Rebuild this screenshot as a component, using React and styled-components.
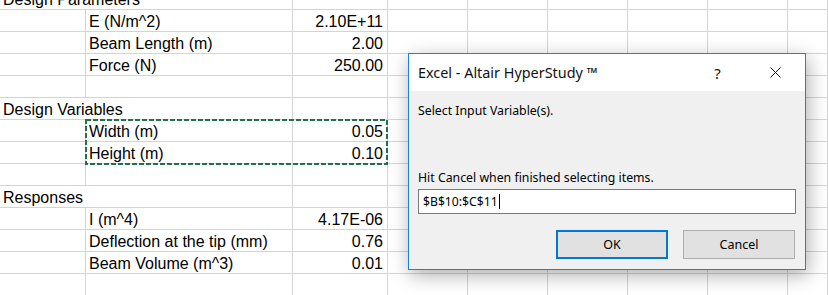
import React from "react";
import styled, { createGlobalStyle } from "styled-components";

const GlobalStyle = createGlobalStyle`
  html, body {
    margin: 0;
    padding: 0;
    background: #fff;
    overflow: hidden;
  }
  * {
    box-sizing: border-box;
  }
`;

const rows = [
  { head: "Design Parameters" },
  { label: "E (N/m^2)", value: "2.10E+11" },
  { label: "Beam Length (m)", value: "2.00" },
  { label: "Force (N)", value: "250.00" },
  {},
  { head: "Design Variables" },
  { label: "Width (m)", value: "0.05" },
  { label: "Height (m)", value: "0.10" },
  {},
  { head: "Responses" },
  { label: "I (m^4)", value: "4.17E-06" },
  { label: "Deflection at the tip (mm)", value: "0.76" },
  { label: "Beam Volume (m^3)", value: "0.01" },
  {},
];

const App = () => {
  return (
    <Page>
      <GlobalStyle />
      <Sheet>
        {rows.map((r, i) => (
          <React.Fragment key={i}>
            {r.head ? (
              <Cell $span={2}>{r.head}</Cell>
            ) : (
              <>
                <Cell />
                <Cell>{r.label}</Cell>
              </>
            )}
            <Cell $right>{r.value}</Cell>
            <Cell />
            <Cell />
            <Cell />
            <Cell />
            <Cell />
            <Cell />
          </React.Fragment>
        ))}
        <Marquee>
          <svg width="304" height="46" viewBox="0 0 304 46">
            <rect
              x="1"
              y="1"
              width="301"
              height="44"
              fill="none"
              stroke="#217346"
              strokeWidth="2"
              strokeDasharray="5 2"
            />
          </svg>
        </Marquee>
      </Sheet>

      <Dialog>
        <TitleBar>
          <Title>Excel - Altair HyperStudy ™</Title>
          <TitleButton>?</TitleButton>
          <TitleButton>
            <svg width="11" height="11" viewBox="0 0 11 11">
              <path d="M0.5 0.5 L10.5 10.5 M10.5 0.5 L0.5 10.5" stroke="#111" strokeWidth="1" fill="none" />
            </svg>
          </TitleButton>
        </TitleBar>
        <Body>
          <Prompt>Select Input Variable(s).</Prompt>
          <Hint>Hit Cancel when finished selecting items.</Hint>
          <Input>
            $B$10:$C$11<Caret />
          </Input>
          <Buttons>
            <Button $default>OK</Button>
            <Button>Cancel</Button>
          </Buttons>
        </Body>
      </Dialog>
    </Page>
  );
};

const Page = styled.div`
  position: relative;
  width: 828px;
  height: 295px;
  overflow: hidden;
  background: #fff;
`;

const Sheet = styled.div`
  position: relative;
  margin-top: -12px;
  display: grid;
  grid-template-columns: 86px 207px 95px 80px 80px 80px 80px 80px 1fr;
  grid-auto-rows: 22px;
  font-family: "Liberation Sans", Arial, sans-serif;
  font-size: 16px;
  color: #000;
`;

const Cell = styled.div`
  grid-column: ${(p) => (p.$span ? `span ${p.$span}` : "auto")};
  height: 22px;
  border-right: 1px solid #d4d4d4;
  border-bottom: 1px solid #d4d4d4;
  display: flex;
  align-items: flex-end;
  justify-content: ${(p) => (p.$right ? "flex-end" : "flex-start")};
  padding: 0 4px 0 3px;
  line-height: 18px;
  white-space: nowrap;
  overflow: visible;
`;

const Marquee = styled.div`
  position: absolute;
  left: 85px;
  top: 131px;
  width: 304px;
  height: 46px;
  pointer-events: none;
  svg {
    display: block;
  }
`;

const Dialog = styled.div`
  position: absolute;
  left: 408px;
  top: 53px;
  width: 398px;
  height: 217px;
  border: 1px solid #1883d7;
  background: #f0f0f0;
  box-shadow: 2px 5px 18px rgba(0, 0, 0, 0.32);
  display: flex;
  flex-direction: column;
  font-family: "Noto Sans", "Open Sans", sans-serif;
  color: #000;
`;

const TitleBar = styled.div`
  height: 37px;
  background: #fff;
  display: flex;
  align-items: center;
  padding-left: 9px;
`;

const Title = styled.div`
  flex: 1;
  font-size: 14.4px;
  color: #111;
`;

const TitleButton = styled.div`
  width: 57px;
  height: 37px;
  display: flex;
  align-items: center;
  justify-content: center;
  font-size: 15px;
  color: #111;
  &:last-child {
    width: 58px;
    margin-right: 1px;
  }
`;

const Body = styled.div`
  flex: 1;
  padding: 12px 9px 9px 9px;
  display: flex;
  flex-direction: column;
  font-size: 12.3px;
`;

const Prompt = styled.div`
  line-height: 16px;
`;

const Hint = styled.div`
  margin-top: 51px;
  line-height: 16px;
`;

const Input = styled.div`
  margin-top: 3px;
  height: 25px;
  width: 378px;
  border: 1px solid #7a7a7a;
  background: #fff;
  display: flex;
  align-items: center;
  padding-left: 4px;
  font-size: 12.2px;
`;

const Caret = styled.span`
  display: inline-block;
  width: 1px;
  height: 15px;
  margin-left: 1px;
  background: #000;
`;

const Buttons = styled.div`
  margin-top: 16px;
  display: flex;
  justify-content: flex-end;
  gap: 15px;
  padding-right: 1px;
`;

const Button = styled.div`
  width: 112px;
  height: 29px;
  background: #e1e1e1;
  border: ${(p) => (p.$default ? "2px solid #0078d7" : "1px solid #adadad")};
  display: flex;
  align-items: center;
  justify-content: center;
  font-size: 12.5px;
  color: #000;
`;

export default App;
